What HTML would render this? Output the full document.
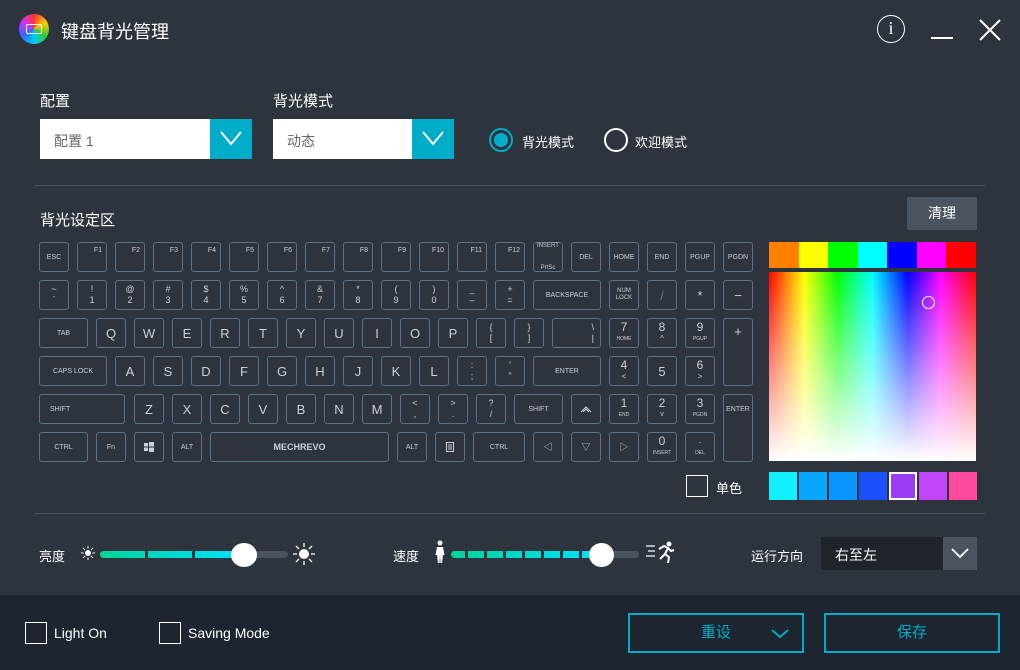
<!DOCTYPE html>
<html><head><meta charset="utf-8"><style>
*{margin:0;padding:0;box-sizing:border-box}
body{width:1020px;height:670px;background:#2e343d;font-family:"Liberation Sans","Noto Sans CJK SC",sans-serif;color:#fff;position:relative;overflow:hidden}
.a{position:absolute}
.k{position:absolute;width:30px;height:30px;border:1px solid #56728c;border-radius:3px;color:#c9d1da;font-size:7px;display:flex;align-items:center;justify-content:center;text-align:center;line-height:9px;white-space:nowrap}
.b{font-size:13px}
.t2{flex-direction:column;justify-content:center;font-size:9px;line-height:11px}
.fn{justify-content:flex-end;align-items:flex-start;padding:3px 4px 0 0;font-size:7px}
.sel{position:absolute;height:40px;background:#fff;color:#666;font-size:14px;padding:12px 14px}
.arr{position:absolute;top:0;right:0;width:42px;height:40px;background:#00adc8}
.cb{position:absolute;width:22px;height:22px;border:1.5px solid #fff}
.sw{position:absolute;top:472px;width:28px;height:28px}
.gap{position:absolute;top:551px;width:3px;height:7px;background:#2e343d}
</style></head><body>
<div class="a" style="left:19px;top:14px;width:30px;height:30px;border-radius:50%;background:conic-gradient(#f33,#fc0,#3c3,#0cf,#36f,#c3f,#f33)"></div>
<div class="a" style="left:26px;top:24px;width:16px;height:10px;border:1.5px solid #fff;border-radius:2px"></div>
<div class="a" style="left:61px;top:18px;font-size:18px">键盘背光管理</div>
<div class="a" style="left:877px;top:15px;width:28px;height:28px;border:1.5px solid #fff;border-radius:50%;font-size:18px;text-align:center;line-height:25px;font-family:'Liberation Serif',serif">i</div>
<div class="a" style="left:931px;top:37px;width:22px;height:2px;background:#fff"></div>
<svg class="a" style="left:978px;top:18px" width="24" height="24"><path d="M2 2L22 22M22 2L2 22" stroke="#fff" stroke-width="2"/></svg>
<div class="a" style="left:40px;top:90px;font-size:15px">配置</div>
<div class="a" style="left:273px;top:90px;font-size:15px">背光模式</div>
<div class="sel" style="left:40px;top:119px;width:212px">配置 1<div class="arr"><svg width="42" height="40"><path d="M11 13L21 25L31 13" stroke="#fff" stroke-width="2" fill="none"/></svg></div></div>
<div class="sel" style="left:273px;top:119px;width:181px">动态<div class="arr"><svg width="42" height="40"><path d="M11 13L21 25L31 13" stroke="#fff" stroke-width="2" fill="none"/></svg></div></div>
<div class="a" style="left:489px;top:128px;width:24px;height:24px;border:2px solid #00adc8;border-radius:50%"><div style="margin:3px;width:14px;height:14px;border-radius:50%;background:#00adc8"></div></div>
<div class="a" style="left:522px;top:132px;font-size:13px">背光模式</div>
<div class="a" style="left:604px;top:128px;width:24px;height:24px;border:2px solid #fff;border-radius:50%"></div>
<div class="a" style="left:635px;top:132px;font-size:13px">欢迎模式</div>
<div class="a" style="left:35px;top:185px;width:950px;height:1px;background:#4a525c"></div>
<div class="a" style="left:40px;top:209px;font-size:15px">背光设定区</div>
<div class="a" style="left:907px;top:197px;width:70px;height:33px;background:#4a5360;font-size:14px;text-align:center;line-height:33px">清理</div>
<div class="k" style="left:39px;top:242px">ESC</div>
<div class="k fn" style="left:77px;top:242px">F1</div>
<div class="k fn" style="left:115px;top:242px">F2</div>
<div class="k fn" style="left:153px;top:242px">F3</div>
<div class="k fn" style="left:191px;top:242px">F4</div>
<div class="k fn" style="left:229px;top:242px">F5</div>
<div class="k fn" style="left:267px;top:242px">F6</div>
<div class="k fn" style="left:305px;top:242px">F7</div>
<div class="k fn" style="left:343px;top:242px">F8</div>
<div class="k fn" style="left:381px;top:242px">F9</div>
<div class="k fn" style="left:419px;top:242px">F10</div>
<div class="k fn" style="left:457px;top:242px">F11</div>
<div class="k fn" style="left:495px;top:242px">F12</div>
<div class="k t2" style="left:533px;top:242px;font-size:6px">INSERT<br><br>PrtSc</div>
<div class="k" style="left:571px;top:242px">DEL</div>
<div class="k" style="left:609px;top:242px">HOME</div>
<div class="k" style="left:647px;top:242px">END</div>
<div class="k" style="left:685px;top:242px">PGUP</div>
<div class="k" style="left:723px;top:242px">PGDN</div>
<div class="k t2" style="left:39px;top:280px">~<br>`</div>
<div class="k t2" style="left:77px;top:280px">!<br>1</div>
<div class="k t2" style="left:115px;top:280px">@<br>2</div>
<div class="k t2" style="left:153px;top:280px">#<br>3</div>
<div class="k t2" style="left:191px;top:280px">$<br>4</div>
<div class="k t2" style="left:229px;top:280px">%<br>5</div>
<div class="k t2" style="left:267px;top:280px">^<br>6</div>
<div class="k t2" style="left:305px;top:280px">&amp;<br>7</div>
<div class="k t2" style="left:343px;top:280px">*<br>8</div>
<div class="k t2" style="left:381px;top:280px">(<br>9</div>
<div class="k t2" style="left:419px;top:280px">)<br>0</div>
<div class="k t2" style="left:457px;top:280px">_<br>–</div>
<div class="k t2" style="left:495px;top:280px">+<br>=</div>
<div class="k" style="left:533px;top:280px;width:68px">BACKSPACE</div>
<div class="k t2" style="left:609px;top:280px;font-size:6px;line-height:7px">NUM<br>LOCK</div>
<div class="k b" style="left:647px;top:280px;color:#6a7480">/</div>
<div class="k b" style="left:685px;top:280px">*</div>
<div class="k b" style="left:723px;top:280px">−</div>
<div class="k" style="left:39px;top:318px;width:49px">TAB</div>
<div class="k b" style="left:96px;top:318px">Q</div>
<div class="k b" style="left:134px;top:318px">W</div>
<div class="k b" style="left:172px;top:318px">E</div>
<div class="k b" style="left:210px;top:318px">R</div>
<div class="k b" style="left:248px;top:318px">T</div>
<div class="k b" style="left:286px;top:318px">Y</div>
<div class="k b" style="left:324px;top:318px">U</div>
<div class="k b" style="left:362px;top:318px">I</div>
<div class="k b" style="left:400px;top:318px">O</div>
<div class="k b" style="left:438px;top:318px">P</div>
<div class="k t2" style="left:476px;top:318px">{<br>[</div>
<div class="k t2" style="left:514px;top:318px">}<br>]</div>
<div class="k t2" style="left:552px;top:318px;width:49px;align-items:flex-end;padding-right:6px">\<br>|</div>
<div class="k t2" style="left:609px;top:318px;font-size:12px;line-height:12px">7<br><span style="font-size:5px">HOME</span></div>
<div class="k t2" style="left:647px;top:318px;font-size:12px;line-height:12px">8<br><span style="font-size:8px">^</span></div>
<div class="k t2" style="left:685px;top:318px;font-size:12px;line-height:12px">9<br><span style="font-size:5px">PGUP</span></div>
<div class="k b" style="left:723px;top:318px;height:68px;align-items:flex-start;padding-top:8px">+</div>
<div class="k" style="left:39px;top:356px;width:68px">CAPS LOCK</div>
<div class="k b" style="left:115px;top:356px">A</div>
<div class="k b" style="left:153px;top:356px">S</div>
<div class="k b" style="left:191px;top:356px">D</div>
<div class="k b" style="left:229px;top:356px">F</div>
<div class="k b" style="left:267px;top:356px">G</div>
<div class="k b" style="left:305px;top:356px">H</div>
<div class="k b" style="left:343px;top:356px">J</div>
<div class="k b" style="left:381px;top:356px">K</div>
<div class="k b" style="left:419px;top:356px">L</div>
<div class="k t2" style="left:457px;top:356px">:<br>;</div>
<div class="k t2" style="left:495px;top:356px">'<br>"</div>
<div class="k" style="left:533px;top:356px;width:68px">ENTER</div>
<div class="k t2" style="left:609px;top:356px;font-size:12px;line-height:12px">4<br><span style="font-size:8px">&lt;</span></div>
<div class="k b" style="left:647px;top:356px">5</div>
<div class="k t2" style="left:685px;top:356px;font-size:12px;line-height:12px">6<br><span style="font-size:8px">&gt;</span></div>
<div class="k" style="left:39px;top:394px;width:86px;justify-content:flex-start;padding-left:10px">SHIFT</div>
<div class="k b" style="left:134px;top:394px">Z</div>
<div class="k b" style="left:172px;top:394px">X</div>
<div class="k b" style="left:210px;top:394px">C</div>
<div class="k b" style="left:248px;top:394px">V</div>
<div class="k b" style="left:286px;top:394px">B</div>
<div class="k b" style="left:324px;top:394px">N</div>
<div class="k b" style="left:362px;top:394px">M</div>
<div class="k t2" style="left:400px;top:394px">&lt;<br>,</div>
<div class="k t2" style="left:438px;top:394px">&gt;<br>.</div>
<div class="k t2" style="left:476px;top:394px">?<br>/</div>
<div class="k" style="left:514px;top:394px;width:49px">SHIFT</div>
<div class="k" style="left:571px;top:394px"><svg width="12" height="8"><path d="M1 7L6 2L11 7M3 7L6 4L9 7" stroke="#c9d1da" fill="none"/></svg></div>
<div class="k t2" style="left:609px;top:394px;font-size:12px;line-height:12px">1<br><span style="font-size:5px">END</span></div>
<div class="k t2" style="left:647px;top:394px;font-size:12px;line-height:12px">2<br><span style="font-size:7px">v</span></div>
<div class="k t2" style="left:685px;top:394px;font-size:12px;line-height:12px">3<br><span style="font-size:5px">PGDN</span></div>
<div class="k" style="left:723px;top:394px;height:68px;align-items:flex-start;padding-top:10px">ENTER</div>
<div class="k" style="left:39px;top:432px;width:49px">CTRL</div>
<div class="k" style="left:96px;top:432px">Fn</div>
<div class="k" style="left:134px;top:432px"><svg width="10" height="10"><path d="M0 1h4v3.5H0zM5 0h5v4.5H5zM0 5.5h4V9H0zM5 5.5h5V10H5z" fill="#c9d1da"/></svg></div>
<div class="k" style="left:172px;top:432px">ALT</div>
<div class="k" style="left:210px;top:432px;width:179px;font-size:9px;font-weight:bold">MECHREVO</div>
<div class="k" style="left:397px;top:432px">ALT</div>
<div class="k" style="left:435px;top:432px"><svg width="8" height="10"><rect x=".5" y=".5" width="7" height="9" stroke="#c9d1da" fill="none"/><path d="M2 3h4M2 5h4M2 7h4" stroke="#c9d1da"/></svg></div>
<div class="k" style="left:473px;top:432px;width:52px">CTRL</div>
<div class="k" style="left:533px;top:432px;font-size:9px">◁</div>
<div class="k" style="left:571px;top:432px;font-size:9px">▽</div>
<div class="k" style="left:609px;top:432px;font-size:9px">▷</div>
<div class="k t2" style="left:647px;top:432px;font-size:12px;line-height:12px">0<br><span style="font-size:5px">INSERT</span></div>
<div class="k t2" style="left:685px;top:432px;font-size:10px;line-height:12px">.<br><span style="font-size:5px">DEL</span></div>
<div class="a" style="left:769px;top:242px;width:207px;height:26px;display:flex">
<div style="flex:1;background:#ff7f00"></div><div style="flex:1;background:#ffff00"></div><div style="flex:1;background:#00ff00"></div><div style="flex:1;background:#00ffff"></div><div style="flex:1;background:#0000ff"></div><div style="flex:1;background:#ff00ff"></div><div style="flex:1;background:#ff0000"></div></div>
<div class="a" style="left:769px;top:272px;width:207px;height:189px;background:linear-gradient(to bottom,rgba(255,255,255,0),#fff),linear-gradient(to right,#f00,#ff0 17%,#0f0 33%,#0ff 50%,#00f 67%,#f0f 83%,#f00)"></div>
<div class="a" style="left:922px;top:296px;width:13px;height:13px;border:1.5px solid #fff;border-radius:50%"></div>
<div class="a" style="left:686px;top:475px;width:22px;height:22px;border:1.5px solid #fff"></div>
<div class="a" style="left:716px;top:478px;font-size:13px">单色</div>
<div class="sw" style="left:769px;background:#10f0ff"></div>
<div class="sw" style="left:799px;background:#0aa6ff"></div>
<div class="sw" style="left:829px;background:#0a96ff"></div>
<div class="sw" style="left:859px;background:#1a50ff"></div>
<div class="sw" style="left:889px;background:#9a3cf4;border:2px solid #fff"></div>
<div class="sw" style="left:919px;background:#c044f8"></div>
<div class="sw" style="left:949px;background:#ff48a0"></div>
<div class="a" style="left:35px;top:513px;width:950px;height:1px;background:#4a525c"></div>
<div class="a" style="left:39px;top:546px;font-size:13px">亮度</div>
<svg class="a" style="left:81px;top:546px" width="14" height="14"><circle cx="7" cy="7" r="3" fill="#fff"/><path d="M7 0v2.5M7 11.5V14M0 7h2.5M11.5 7H14M2 2l2 2M10 10l2 2M12 2l-2 2M4 10l-2 2" stroke="#fff" stroke-width="1"/></svg>
<div class="a" style="left:100px;top:551px;width:188px;height:7px;border-radius:4px;background:#4a5360"></div>
<div class="a" style="left:100px;top:551px;width:146px;height:7px;border-radius:4px;background:linear-gradient(to right,#00d49a,#00e0ff)"></div>
<div class="gap" style="left:145px"></div><div class="gap" style="left:192px"></div>
<div class="a" style="left:231px;top:543px;width:26px;height:24px;border-radius:50%;background:#fff"></div>
<svg class="a" style="left:293px;top:543px" width="22" height="22"><circle cx="11" cy="11" r="5" fill="#fff"/><path d="M11 0v4M11 18v4M0 11h4M18 11h4M3 3l3 3M16 16l3 3M19 3l-3 3M6 16l-3 3" stroke="#fff" stroke-width="1.3"/></svg>
<div class="a" style="left:393px;top:546px;font-size:13px">速度</div>
<svg class="a" style="left:434px;top:540px" width="12" height="24"><circle cx="6" cy="3" r="2.5" fill="#fff"/><path d="M3 7h6l1.5 8H9l-1 8H6.5l-.5-7-.5 7H4l-1-8H1.5z" fill="#fff"/></svg>
<div class="a" style="left:451px;top:551px;width:188px;height:7px;border-radius:4px;background:#4a5360"></div>
<div class="a" style="left:451px;top:551px;width:152px;height:7px;border-radius:4px;background:linear-gradient(to right,#00d49a,#00e0ff)"></div>
<div class="gap" style="left:465px"></div><div class="gap" style="left:484px"></div><div class="gap" style="left:503px"></div><div class="gap" style="left:522px"></div><div class="gap" style="left:541px"></div><div class="gap" style="left:560px"></div><div class="gap" style="left:579px"></div>
<div class="a" style="left:589px;top:543px;width:25px;height:24px;border-radius:50%;background:#fff"></div>
<svg class="a" style="left:645px;top:541px" width="30" height="22"><path d="M1 5h9M3 10h7M1 15h9" stroke="#fff" stroke-width="1.3"/><circle cx="24" cy="3" r="2.5" fill="#fff"/><path d="M14 8l5-3 4 2-3 6 4 3-1 6M20 13l-5 5M23 7l3 3 3-1" stroke="#fff" stroke-width="2" fill="none" stroke-linejoin="round"/></svg>
<div class="a" style="left:751px;top:546px;font-size:13px">运行方向</div>
<div class="a" style="left:821px;top:537px;width:156px;height:33px;background:#1f242b;font-size:14px;padding:8px 14px">右至左</div>
<div class="a" style="left:943px;top:537px;width:34px;height:33px;background:#4a5360"><svg width="34" height="33"><path d="M9 12L17 20L25 12" stroke="#fff" stroke-width="1.8" fill="none"/></svg></div>
<div class="a" style="left:0;top:595px;width:1020px;height:75px;background:#1c2530"></div>
<div class="cb" style="left:25px;top:622px"></div>
<div class="a" style="left:54px;top:625px;font-size:14px">Light On</div>
<div class="cb" style="left:159px;top:622px"></div>
<div class="a" style="left:188px;top:625px;font-size:14px">Saving Mode</div>
<div class="a" style="left:628px;top:613px;width:176px;height:40px;border:2px solid #00adc8;color:#00adc8;font-size:15px;text-align:center;line-height:36px">重设<svg style="position:absolute;right:12px;top:13px" width="20" height="12"><path d="M2 2L10 9L18 2" stroke="#00adc8" stroke-width="2" fill="none"/></svg></div>
<div class="a" style="left:824px;top:613px;width:176px;height:40px;border:2px solid #00adc8;color:#00adc8;font-size:15px;text-align:center;line-height:36px">保存</div>
</body></html>
